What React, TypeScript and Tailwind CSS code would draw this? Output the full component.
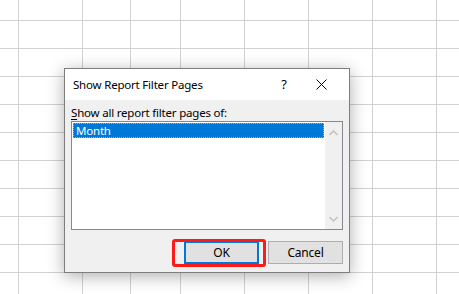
import React from "react";

const columns = 9;
const rows = 11;

function Chevron({ up }: { up?: boolean }) {
  return (
    <svg width="9" height="6" viewBox="0 0 9 6" className="block">
      <polyline
        points={up ? "0.5,5 4.5,1 8.5,5" : "0.5,1 4.5,5 8.5,1"}
        fill="none"
        stroke="#c4c4c4"
        strokeWidth="1.6"
      />
    </svg>
  );
}

export default function App() {
  const font = { fontFamily: '"Noto Sans", "Open Sans", sans-serif' };

  return (
    <div className="relative h-[294px] w-[459px] overflow-hidden bg-white" style={font}>
      {/* spreadsheet grid behind the dialog */}
      <div className="grid h-full grid-cols-[19px_64px_48px_50px_64px_64px_64px_64px_1fr] grid-rows-[21px_repeat(10,28px)]">
        {Array.from({ length: columns * rows }).map((_, i) => (
          <div
            key={i}
            className={
              i % columns === columns - 1
                ? "border-b border-[#d2d2d2]"
                : "border-r border-b border-[#d2d2d2]"
            }
          />
        ))}
      </div>

      {/* dialog */}
      <div className="absolute left-[64px] top-[68px] flex h-[205px] w-[286px] flex-col border border-[#7d7d7d] bg-[#f0f0f0] shadow-[0_3px_16px_rgba(0,0,0,0.32)]">
        <div className="flex h-[31px] items-center bg-white pl-[8px] text-[11.5px] tracking-[-0.2px] text-black">
          <span className="flex-1">Show Report Filter Pages</span>
          <span className="w-[14px] text-center text-[13px]">?</span>
          <div className="flex w-[58px] justify-center pl-[3px]">
            <svg width="11" height="11" viewBox="0 0 11 11">
              <path d="M0.5 0.5 L10.5 10.5 M10.5 0.5 L0.5 10.5" stroke="#000" strokeWidth="1" />
            </svg>
          </div>
        </div>

        <div className="flex flex-1 flex-col px-[6px] pt-[5px] pb-[8px] text-[11.5px] tracking-[-0.2px] text-black">
          <p className="h-[16px] leading-[16px]">
            <span className="underline underline-offset-2">S</span>how all report filter pages of:
          </p>

          <div className="flex h-[109px] border border-[#828790] bg-white">
            <div className="flex-1 p-[1px]">
              <div className="flex h-[15px] items-center border border-dotted border-[#f0a040] bg-[#0078d7] pl-[2px] leading-none text-white">
                Month
              </div>
            </div>
            <div className="flex w-[17px] flex-col items-center justify-between bg-[#f0f0f0] pt-[8px] pb-[7px]">
              <Chevron up />
              <Chevron />
            </div>
          </div>

          <div className="mt-[11px] flex justify-end gap-[9px]">
            <button className="flex h-[23px] w-[75px] items-center justify-center border-2 border-[#0078d7] bg-[#e1e1e1] text-[12px]">
              OK
            </button>
            <button className="flex h-[23px] w-[75px] items-center justify-center border border-[#adadad] bg-[#e1e1e1] text-[12px]">
              Cancel
            </button>
          </div>
        </div>
      </div>

      {/* red highlight around OK */}
      <div className="absolute left-[172px] top-[239px] h-[28px] w-[94px] rounded-[3px] border-[3px] border-[#ff1a1a]" />
    </div>
  );
}
